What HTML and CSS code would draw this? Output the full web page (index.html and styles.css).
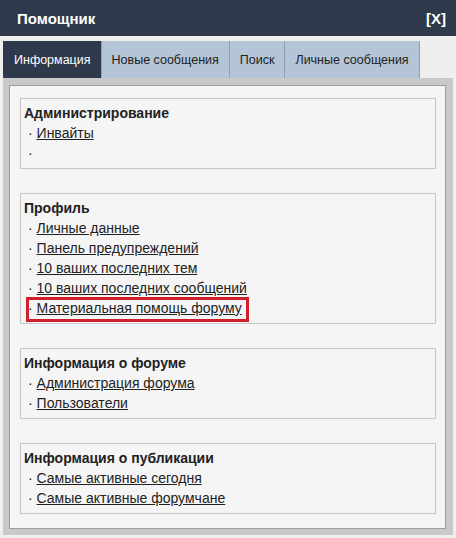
FILE: index.html
```html
<!DOCTYPE html>
<html lang="ru">
<head>
    <meta charset="UTF-8">
    <title>Помощник</title>
    <link rel="stylesheet" href="styles.css">
</head>
<body>
<div class="helper">
    <div class="helper-head">
        <span class="helper-title">Помощник</span>
        <a href="#" class="helper-close">[X]</a>
    </div>
    <div class="helper-body">
        <ul class="tabs">
            <li class="current">Информация</li>
            <li>Новые сообщения</li>
            <li>Поиск</li>
            <li>Личные сообщения</li>
        </ul>
        <div class="frame">
            <div class="panel">
                <div class="group">
                    <h3>Администрирование</h3>
                    <ul>
                        <li>· <a href="#">Инвайты</a></li>
                        <li>·</li>
                    </ul>
                </div>
                <div class="group">
                    <h3>Профиль</h3>
                    <ul>
                        <li>· <a href="#">Личные данные</a></li>
                        <li>· <a href="#">Панель предупреждений</a></li>
                        <li>· <a href="#">10 ваших последних тем</a></li>
                        <li>· <a href="#">10 ваших последних сообщений</a></li>
                        <li class="marked">· <a href="#">Материальная помощь форуму</a></li>
                    </ul>
                </div>
                <div class="group">
                    <h3>Информация о форуме</h3>
                    <ul>
                        <li>· <a href="#">Администрация форума</a></li>
                        <li>· <a href="#">Пользователи</a></li>
                    </ul>
                </div>
                <div class="group">
                    <h3>Информация о публикации</h3>
                    <ul>
                        <li>· <a href="#">Самые активные сегодня</a></li>
                        <li>· <a href="#">Самые активные форумчане</a></li>
                    </ul>
                </div>
            </div>
        </div>
    </div>
</div>
</body>
</html>
```

FILE: styles.css
```css
* {
    margin: 0;
    padding: 0
}

ul {
    list-style: none
}

body {
    background-color: #efefef;
    font-family: "Liberation Sans", Arial, sans-serif;
    color: #222;
}

.helper {
    width: 456px;
}

/* тёмная шапка окна */
.helper-head {
    height: 36px;
    background-color: #2e3a4b;
    display: flex;
    align-items: center;
    justify-content: space-between;
    padding: 0 10px 0 17px;
    box-sizing: border-box;
    color: #fff;
    font-weight: bold;
    font-size: 15px;
}

.helper-close {
    color: #fff;
    text-decoration: none;
}

.helper-body {
    padding: 5px 3px 3px 3px;
}

/* вкладки */
.tabs {
    display: flex;
    height: 37px;
}

.tabs li {
    display: flex;
    align-items: center;
    padding: 1px 10px 0;
    font-size: 12.5px;
    background-color: #b5c5d8;
    border-left: 1px solid #8f9fb3;
    color: #222;
    cursor: pointer;
}

.tabs li:last-child {
    border-right: 1px solid #8f9fb3;
}

.tabs li.current {
    background-color: #2e3a4b;
    border-left-color: #2e3a4b;
    color: #fff;
}

.frame {
    background-color: #c9c9c9;
    padding: 7px 7px 6px 6px;
}

.panel {
    background-color: #f5f5f5;
    border: 1px solid #9e9e9e;
    padding: 12px 9px 14px 10px;
}

.group {
    border: 1px solid #c6c6c6;
    padding: 4px 3px 5px;
    margin-bottom: 24px;
    font-size: 14px;
    line-height: 20px;
}

.group:last-child {
    margin-bottom: 0;
}

.group h3 {
    font-size: 14px;
    font-weight: bold;
}

.group li {
    padding-left: 4px;
}

.group a {
    color: #222;
}

/* выделенный пункт: красная рамка поверх строки */
.group li.marked {
    position: relative;
    width: fit-content;
    margin-left: 4px;
    padding-left: 0;
}

.group li.marked::after {
    content: "";
    position: absolute;
    left: -2px;
    right: -7px;
    top: -1px;
    bottom: -4px;
    border: 3px solid #cf1f2d;
}
```
